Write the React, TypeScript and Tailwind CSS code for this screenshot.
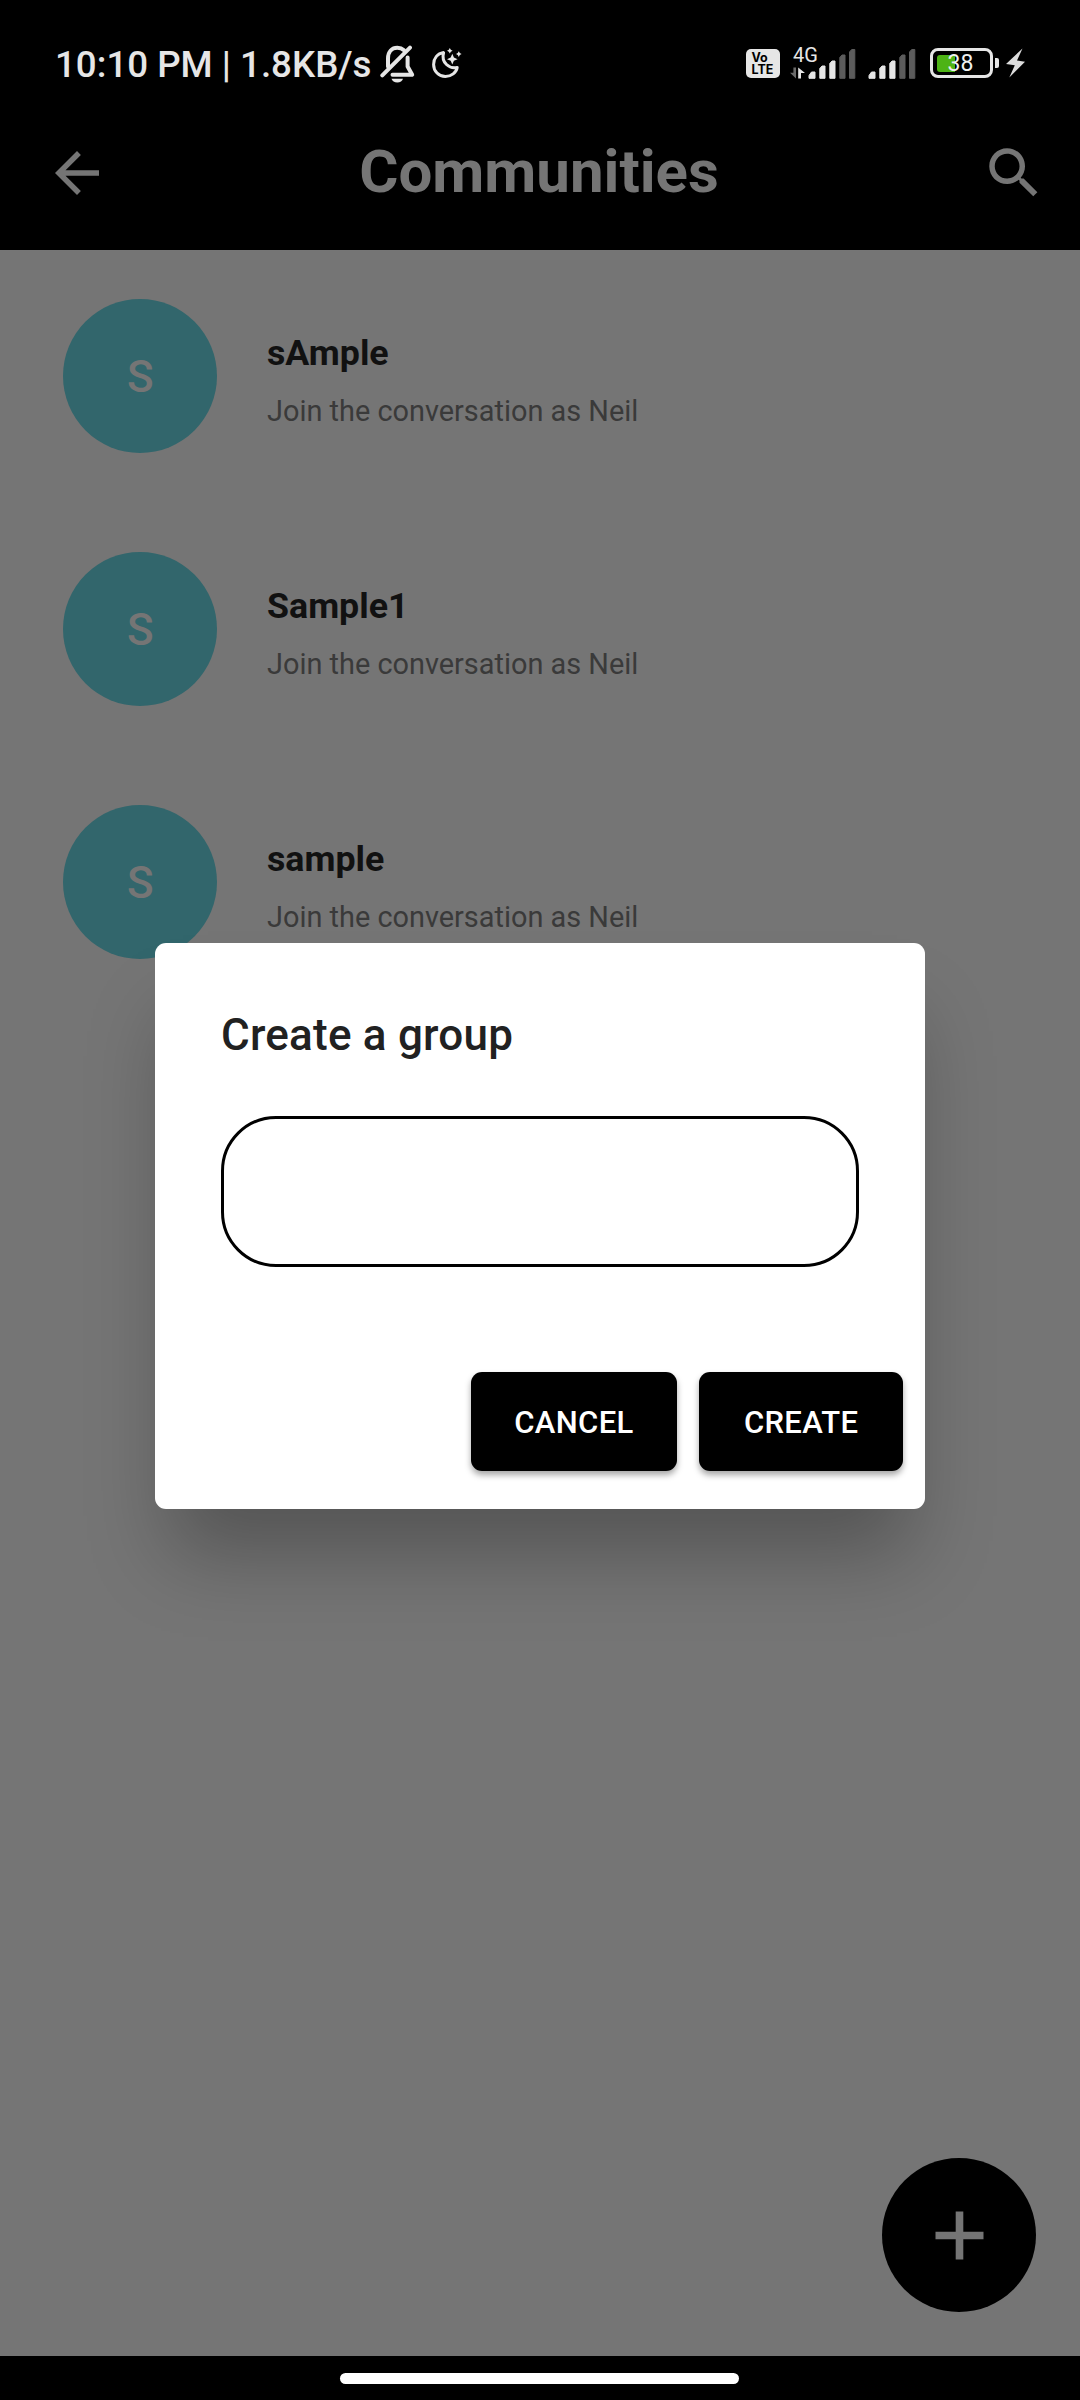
const communities = [
  { id: 1, name: "sAmple", initial: "S" },
  { id: 2, name: "Sample1", initial: "S" },
  { id: 3, name: "sample", initial: "S" },
];

function MutedBellIcon() {
  return (
    <svg viewBox="380 44 36 40" className="h-10 w-9" fill="none" stroke="#e6e6e6" strokeWidth="4" strokeLinecap="round" strokeLinejoin="round">
      <path d="M388 66.5V58.5C388 51.5 392 47.8 397.3 47.8C400 47.8 402.3 48.7 404 50.2" />
      <path d="M407.6 57.5V66.5L412.2 74.8H392.5" />
      <path d="M382.3 75.3L410 47.6" />
      <path d="M391.5 78.8H403C402.4 81 400.2 82.6 397.3 82.6C394.4 82.6 392.1 81 391.5 78.8Z" fill="#e6e6e6" stroke="none" />
    </svg>
  );
}

function MoonIcon() {
  return (
    <svg viewBox="431 46 32 36" className="mt-0.5 ml-[15px] h-9 w-8">
      <path
        d="M443.6 52.6C437.3 53.7 433.6 58.5 433.6 64.4C433.6 71.2 438.8 76.4 445.4 76.4C451.4 76.4 456.3 72.6 457.2 67.4C449.6 69.2 440.8 62.8 443.6 52.6Z"
        fill="none"
        stroke="#e6e6e6"
        strokeWidth="3"
        strokeLinejoin="round"
      />
      <path d="M452.3 53.8L453.9 57.6L457.6 59.2L453.9 60.8L452.3 64.6L450.7 60.8L447 59.2L450.7 57.6Z" fill="#e6e6e6" />
      <path d="M449.8 47.9L450.8 49.7L452.6 50.7L450.8 51.7L449.8 53.5L448.8 51.7L447 50.7L448.8 49.7Z" fill="#e6e6e6" />
      <path d="M458.8 51.3L459.8 53.1L461.6 54.1L459.8 55.1L458.8 56.9L457.8 55.1L456 54.1L457.8 53.1Z" fill="#e6e6e6" />
    </svg>
  );
}

function VolteBadge() {
  return (
    <div className="mt-[3px] flex h-[29px] w-[34px] flex-col rounded-[5px] bg-[#e6e6e6] pt-[3px] pl-[5.5px] font-[Inter] font-bold text-black">
      <span className="text-[12.5px] leading-[11px]">Vo</span>
      <span className="text-[12.5px] leading-[13px]">LTE</span>
    </div>
  );
}

function SignalBars() {
  return (
    <svg viewBox="0 0 49 36" className="h-9 w-[49px]">
      <g fill="#e6e6e6" stroke="#e6e6e6" strokeWidth="1" strokeLinejoin="round">
        <path d="M1 32.3V29.5L3.5 26H7V32.3Z" />
        <path d="M11.8 32.3V22.5L14 20H17V32.3Z" />
        <path d="M21.8 32.3V17.5L24 15H27V32.3Z" />
      </g>
      <g fill="#5c5c5c" stroke="#5c5c5c" strokeWidth="1" strokeLinejoin="round">
        <path d="M31.8 32.3V11.5L34 9H37V32.3Z" />
        <path d="M41.5 32.3V6L43.7 3.5H46.8V32.3Z" />
      </g>
    </svg>
  );
}

function MobileData() {
  return (
    <div className="relative ml-[10px] flex pl-[18px]">
      <span className="absolute -top-[3px] left-[3px] text-[20px] leading-[24px] text-[#e6e6e6]">4G</span>
      <svg viewBox="0 0 16 12" className="absolute top-[21px] left-0 h-3 w-4">
        <path d="M6 0.5V11.5L0 5.8H3.4V0.5Z" fill="#6a6a6a" />
        <path d="M8.2 11.5V0.5L15 6H11V11.5Z" fill="#e6e6e6" />
      </svg>
      <SignalBars />
    </div>
  );
}

function Battery() {
  return (
    <div className="mt-[2px] ml-[13px] flex h-[30px] items-center gap-[2px]">
      <div className="relative h-[30px] w-[63px] rounded-[8px] border-[3px] border-[#e6e6e6] p-[3.5px]">
        <div className="h-[17.5px] w-[18px] rounded-l-[3px] bg-[#4db315]" />
        <span className="absolute top-[1px] left-[14.5px] text-[23px] leading-[24px] text-[#f0f0f0]">38</span>
      </div>
      <div className="h-[10px] w-[4px] rounded-r-[2px] bg-[#e6e6e6]" />
    </div>
  );
}

function StatusBar() {
  return (
    <div className="flex h-[94px] items-start justify-between pt-[46px] pr-[55px] pl-[55px]">
      <div className="-mt-[2px] flex">
        <span className="w-[325px] text-[36.7px] leading-[41px] font-medium whitespace-nowrap text-[#e6e6e6]">10:10 PM | 1.8KB/s</span>
        <MutedBellIcon />
        <MoonIcon />
      </div>
      <div className="flex items-start">
        <VolteBadge />
        <MobileData />
        <div className="ml-[11px]">
          <SignalBars />
        </div>
        <Battery />
        <svg viewBox="1006 46 19 36" className="ml-[7px] h-9 w-[19px]">
          <path d="M1022.5 48.5L1006 64L1014.8 65.2L1009.3 77.5L1025 61.8L1017 60.4Z" fill="#dcdcdc" />
        </svg>
      </div>
    </div>
  );
}

function AppBar() {
  return (
    <div className="flex h-[156px] items-start justify-between pr-[33px] pl-[44px] text-[#757575]">
      <button aria-label="Back" className="mt-[46px]">
        <svg viewBox="0 0 24 24" className="size-[66px]" fill="currentColor">
          <path d="M20 11H7.83l5.59-5.59L12 4l-8 8 8 8 1.41-1.41L7.83 13H20v-2z" />
        </svg>
      </button>
      <h1 className="mt-[43px] mr-[13px] text-[60px] leading-[70px] font-bold">Communities</h1>
      <button aria-label="Search" className="mt-[46px]">
        <svg viewBox="0 0 24 24" className="size-[66px]" fill="currentColor">
          <path d="M15.5 14h-.79l-.28-.27C15.41 12.59 16 11.11 16 9.5 16 5.91 13.09 3 9.5 3S3 5.91 3 9.5 5.91 16 9.5 16c1.61 0 3.09-.59 4.23-1.57l.27.28v.79l5 4.99L20.49 19l-4.99-5zm-6 0C7.01 14 5 11.99 5 9.5S7.01 5 9.5 5 14 7.01 14 9.5 11.99 14 9.5 14z" />
        </svg>
      </button>
    </div>
  );
}

function CommunityRow({ name, initial }: { name: string; initial: string }) {
  return (
    <li className="flex h-[253px] items-start pt-[49.4px] pl-[63.3px]">
      <div className="flex size-[154px] items-center justify-center rounded-full bg-[#32666c] pt-[1.5px] text-[44px] leading-[52px] font-medium text-[#757575]">
        {initial}
      </div>
      <div className="ml-[49.7px] pt-[32.6px]">
        <div className="text-[35.75px] leading-[42px] font-bold text-[#111111]">{name}</div>
        <div className="mt-[20px] text-[28.9px] leading-[34px] text-[#3a3a3a]">Join the conversation as Neil</div>
      </div>
    </li>
  );
}

function CreateGroupDialog() {
  return (
    <div
      role="dialog"
      className="absolute top-[942.5px] left-[155px] h-[566.5px] w-[770px] rounded-[11px] bg-white pt-[66px] pr-[22px] pl-[66px] shadow-[0_60px_76px_-15px_rgba(0,0,0,0.28)]"
    >
      <h2 className="text-[44px] leading-[52px] font-medium tracking-[0.22px] text-[#212121]">Create a group</h2>
      <input aria-label="Group name" className="mt-[55px] block h-[151px] w-[638px] rounded-[55px] border-[3px] border-black px-11 text-[44px] outline-none" />
      <div className="mt-[105px] flex justify-end gap-[22px]">
        <button className="h-[99px] w-[206.5px] rounded-[11px] bg-black pt-[5px] text-[31px] font-medium tracking-[0.35px] text-white shadow-[0_4px_6px_rgba(0,0,0,0.35)]">
          CANCEL
        </button>
        <button className="h-[99px] w-[203.8px] rounded-[11px] bg-black pt-[5px] text-[31px] font-medium tracking-[0.35px] text-white shadow-[0_4px_6px_rgba(0,0,0,0.35)]">
          CREATE
        </button>
      </div>
    </div>
  );
}

export default function App() {
  return (
    <div className="relative flex h-[2400px] w-[1080px] flex-col overflow-hidden bg-[#757575] font-[Roboto,sans-serif]">
      <header className="h-[250px] bg-black">
        <StatusBar />
        <AppBar />
      </header>
      <ul className="grow">
        {communities.map((c) => (
          <CommunityRow key={c.id} name={c.name} initial={c.initial} />
        ))}
      </ul>
      <button aria-label="Add community" className="absolute right-[44px] bottom-[88px] flex size-[154px] items-center justify-center rounded-full bg-black">
        <svg viewBox="0 0 49 49" className="size-[49px]" fill="#757575">
          <path d="M20.7 0.5h7.6v20.3h20.2v7.4H28.3v20.3h-7.6V28.2H0.5v-7.4h20.2z" />
        </svg>
      </button>
      <CreateGroupDialog />
      <footer className="flex h-[44px] bg-black pt-[17px] pl-[340px]">
        <div className="h-[10.5px] w-[399px] rounded-full bg-white" />
      </footer>
    </div>
  );
}
